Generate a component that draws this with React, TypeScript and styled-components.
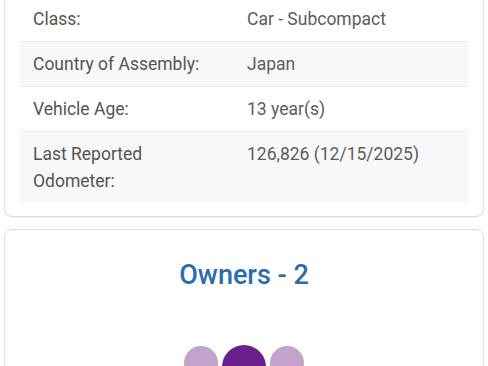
import styled, { createGlobalStyle } from 'styled-components';

const GlobalStyle = createGlobalStyle`
  html, body {
    margin: 0;
    padding: 0;
    background: #fff;
    font-family: Roboto, "Liberation Sans", Arial, sans-serif;
    overflow: hidden;
  }
`;

type Detail = { label: string; value: string };

const details: Detail[] = [
  { label: 'Class:', value: 'Car - Subcompact' },
  { label: 'Country of Assembly:', value: 'Japan' },
  { label: 'Vehicle Age:', value: '13 year(s)' },
  { label: 'Last Reported Odometer:', value: '126,826 (12/15/2025)' },
];

const owners = [
  { size: 34, color: '#c3a2cc' },
  { size: 44, color: '#6b1f8c' },
  { size: 34, color: '#c3a2cc' },
];

//車両詳細 + オーナー数
function App() {
  return (
    <Page>
      <GlobalStyle />
      <DetailCard>
        <Table>
          {details.map((d, i) => (
            <Row key={d.label} $striped={i % 2 === 1} $last={i === details.length - 1}>
              <Label>{d.label}</Label>
              <Value>{d.value}</Value>
            </Row>
          ))}
        </Table>
      </DetailCard>
      <OwnersCard>
        <Title>Owners - 2</Title>
        <Dots>
          {owners.map((o, i) => (
            <Dot key={i} $size={o.size} $color={o.color} />
          ))}
        </Dots>
      </OwnersCard>
    </Page>
  );
}

export default App;

const Page = styled.div`
  display: flex;
  flex-direction: column;
  gap: 12px;
  padding: 0 4px;
  height: 366px;
  overflow: hidden;
`;

const Card = styled.div`
  background: #fff;
  border: 1px solid #dedede;
  border-radius: 8px;
  box-shadow: 0 1px 2px rgba(0, 0, 0, 0.04);
`;

const DetailCard = styled(Card)`
  margin-top: -21px;
  padding: 17px 15px 13px;
`;

const Table = styled.div`
  display: flex;
  flex-direction: column;
`;

const Row = styled.div<{ $striped: boolean; $last: boolean }>`
  display: grid;
  grid-template-columns: 214px 1fr;
  background: ${(p) => (p.$striped ? '#f8f8f8' : '#fff')};
  border-bottom: ${(p) => (p.$last ? 'none' : '1px solid #ececec')};
  padding: 8.5px 0;
  font-size: 17.5px;
  line-height: 27px;
`;

const Label = styled.div`
  padding: 0 8px 0 13px;
  color: #545454;
`;

const Value = styled.div`
  padding-left: 13px;
  color: #5c5c5c;
`;

const OwnersCard = styled(Card)`
  display: flex;
  flex-direction: column;
  align-items: center;
  padding-top: 27px;
  height: 200px;
`;

const Title = styled.h2`
  margin: 0;
  font-size: 27px;
  font-weight: 500;
  line-height: 36px;
  color: #2b6cae;
`;

const Dots = styled.div`
  display: flex;
  align-items: flex-start;
  gap: 4px;
  margin-top: 52px;
`;

const Dot = styled.div<{ $size: number; $color: string }>`
  width: ${(p) => p.$size}px;
  height: ${(p) => p.$size}px;
  border-radius: 50%;
  background: ${(p) => p.$color};
  margin-top: ${(p) => (p.$size < 40 ? 1 : 0)}px;
`;
